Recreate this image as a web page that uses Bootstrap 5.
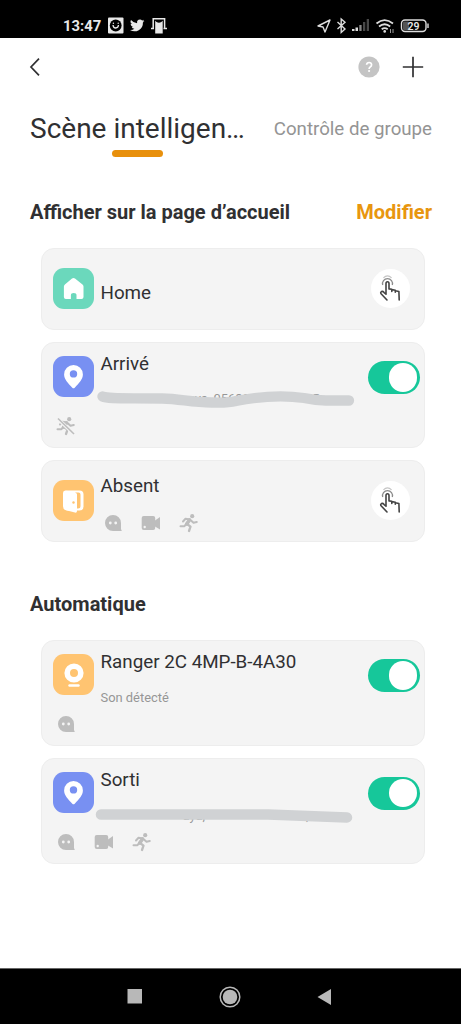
<!DOCTYPE html>
<html lang="fr">
<head>
<meta charset="utf-8">
<meta name="viewport" content="width=device-width, initial-scale=1">
<title>Scène intelligente</title>
<link href="https://cdn.jsdelivr.net/npm/bootstrap@5.3.0/dist/css/bootstrap.min.css" rel="stylesheet">
<style>
body{font-family:Roboto,"Liberation Sans",sans-serif;color:#303032;background:#fff;height:1024px;overflow:hidden}
svg{display:block;flex:none}
.statusbar{height:38px;background:#000;color:#e8e8e8;padding:0 31px 0 63px}
.clock{font-size:14.8px;line-height:26px;font-weight:700;width:45px;margin-top:13px}
.topbar{height:57px;padding:0 37px 0 28px}
.tabs{height:66px;padding:0 29px}
.tab-on{font-size:28px;line-height:36px;width:216px;margin-top:16px;padding-left:1px;white-space:nowrap}
.tab-on i{display:block;width:51px;height:6.5px;border-radius:4px;background:#e8900c;margin:3px auto 0}
.tab-off{font-size:18.7px;line-height:24px;color:#949494;margin-top:22px;white-space:nowrap}
.sect{font-size:20px;line-height:26px;font-weight:700;padding:0 29px 0 30px;white-space:nowrap}
.edit{color:#e8960f}
.scenes{padding:0 36px 0 41px;gap:12px}
.scene{background:#f4f4f4;border:1px solid #ededed;border-radius:13px;height:105.700px;padding:13px 4.5px 0 11px}
.scene.short{height:82px;padding-top:19px;padding-right:14.5px}
.tile{width:41px;height:41px;border-radius:11px}
.mint{background:#6bd8bc}.blue{background:#7890f2}.amber{background:#ffc471}
.info{margin-left:6.5px;white-space:nowrap}
.name{font-size:18.8px;line-height:24px}
.sub{font-size:12.9px;line-height:16px;color:#969696}
.glyphs{gap:16px;color:#bdbdbd}
.scene>.glyphs{margin:8px 0 0 2px}
.tap{width:39px;height:39px;background:#fff;margin-top:1px}
.toggle{width:52px;height:33px;border-radius:17px;background:#16c79a;padding:2px 2.5px;margin-top:5px}
.toggle b{width:28.5px;height:28.5px;background:#fff}
.brush{position:absolute;left:-7px;top:-5px}
.bottombar{height:56px;background:#000;border-top:1px solid #666}
</style>
</head>
<body class="d-flex flex-column">
<svg width="0" height="0" class="position-absolute">
 <symbol id="chat" viewBox="0 0 22 20"><path fill="currentColor" d="M11 2a8 7.900 0 0 1 8 7.900V16l.8 2H11a8 8 0 0 1 0-16Z"/><circle cx="8.300" cy="10" r="1.400" fill="#f4f4f4"/><circle cx="13.700" cy="10" r="1.400" fill="#f4f4f4"/></symbol>
 <symbol id="cam" viewBox="0 0 22 20"><rect x="1.700" y="3" width="13.500" height="14" rx="2" fill="currentColor"/><path fill="currentColor" d="M15 7.500 20 4v12.500l-5-3Z"/><circle cx="4.700" cy="14" r="1.200" fill="#f4f4f4"/></symbol>
 <symbol id="run" viewBox="0 0 22 20"><circle cx="14.200" cy="3.200" r="2.100" fill="currentColor"/><g fill="none" stroke="currentColor" stroke-linecap="round" stroke-linejoin="round"><path stroke-width="2" d="M5 8.500 7.500 5.800 12 6.500M13 7.500l2.500 2.300 3.300-.8M2.500 13.200h4l2-2.700"/><path stroke-width="3.600" d="m11.500 7-2.800 4"/><path stroke-width="2.300" d="m9 11 3.500 2.700-1.500 4.300"/></g></symbol>
 <symbol id="pin" viewBox="0 0 41 41"><path fill="#fff" fill-rule="evenodd" d="M20.500 9a9.400 9.400 0 0 1 9.400 9.400c0 4.800-4 8.700-8.200 13.300q-1.200 1-2.400 0c-4.200-4.600-8.200-8.500-8.200-13.300A9.400 9.400 0 0 1 20.500 9Zm0 5.200a3.700 3.700 0 1 0 0 7.400 3.700 3.700 0 0 0 0-7.400Z"/></symbol>
 <symbol id="hand" viewBox="0 0 39 39"><g fill="none" stroke="#444" stroke-width="1.600" stroke-linejoin="round" stroke-linecap="round"><path d="M16 31 10.300 25q-1.300-1.600.2-2.400 1.300-.6 2.600 1l1.900 1.600V14.600q0-1.800 1.500-1.800t1.500 1.800v5.300l2.800.4v2.200m0-1.900 3.500.6v2m0-1.500 3.600.8.300 8.500"/></g><path d="M11.700 16a5 5 0 1 1 9.600 0" fill="none" stroke="#8c8c8c" stroke-width="1.300"/><path d="M12.400 8.800q4.100-4 8.200 0" fill="none" stroke="#c4c4c4" stroke-width="1.100"/></symbol>
</svg>

<header class="statusbar d-flex align-items-start flex-shrink-0">
 <span class="clock">13:47</span>
 <svg width="60" height="18" viewBox="0 0 60 18" style="margin-top:17px"><rect width="15.500" height="16" y=".5" rx="1" fill="#e8e8e8"/><circle cx="7.700" cy="8.500" r="5.900" fill="#000"/><path d="M5 8q.2 3 2.700 3T10.500 8" fill="none" stroke="#e8e8e8" stroke-width="1.300"/><circle cx="5.400" cy="6.300" r=".7" fill="#e8e8e8"/><circle cx="10.200" cy="6.300" r=".7" fill="#e8e8e8"/>
 <path fill="#e8e8e8" transform="translate(22 1.200) scale(.6)" d="M24 4.560a10 10 0 0 1-2.830.780 4.940 4.940 0 0 0 2.160-2.720 9.900 9.900 0 0 1-3.120 1.190A4.920 4.920 0 0 0 11.800 8.300 14 14 0 0 1 1.670 3.150 4.930 4.930 0 0 0 3.200 9.720a4.900 4.900 0 0 1-2.230-.610 4.930 4.930 0 0 0 3.950 4.890 4.900 4.900 0 0 1-2.220.080 4.930 4.930 0 0 0 4.600 3.420A9.870 9.870 0 0 1 0 19.540 14 14 0 0 0 21.540 7.100 10 10 0 0 0 24 4.560Z"/>
 <path fill="none" stroke="#e8e8e8" stroke-width="1.500" d="M45.200 11.500V1.800h11.400v9.700M43 11.500h3m9.500 0h3.500"/><path fill="#e8e8e8" d="M47.200 3.800 48.500 5q2.500 1.500 4.800 0l1.400-1.200v12.700h-7.500Z"/></svg>
 <svg class="ms-auto" width="114" height="20" viewBox="316 15 114 20" style="margin-top:15px"><g fill="none" stroke="#ddd" stroke-width="1.400"><path stroke-linejoin="round" d="M318 26 330 20l-5 12-2-5Z"/><path d="m337.500 22 7.500 7-3.800 3.500V19L345 22.300l-7.500 6.700"/><path stroke-width="1.800" d="M376.500 23.500q8-6.800 16.500 0M379 26.500q5.700-4.600 11.200 0M381.700 29.300q3-2.300 6 0"/><rect x="401.500" y="20" width="24.500" height="11.500" rx="3.500"/><path d="M428 23.500v4.500"/></g><circle cx="384.700" cy="31.400" r="1.300" fill="#ddd"/><path stroke="#999" d="M390.500 29v4m2.500-4v4"/><rect x="403" y="21.500" width="6" height="8.500" rx="1" fill="#555"/><path fill="#ddd" d="M352 29h2.500v2H352Zm3.500-1.500h2.500V31h-2.500Z"/><path fill="#888" d="M359.300 25h2.300v6h-2.300Z"/><path fill="#484848" d="M363 22h2.300v9H363Zm3.700-3h2.300v12h-2.300Z"/><text x="413.600" y="29.700" text-anchor="middle" font-family="Roboto,sans-serif" font-size="10.500" font-weight="600" fill="#e8e8e8">29</text></svg>
</header>

<nav class="topbar d-flex align-items-center flex-shrink-0">
 <svg width="14" height="20" viewBox="0 0 14 20"><path d="M11 1.700 3 10l8 8.300" fill="none" stroke="#303032" stroke-width="1.700"/></svg>
 <svg class="ms-auto" width="22" height="22" viewBox="0 0 22 22"><circle cx="11" cy="11" r="10.600" fill="#c4c4c4"/><path d="M8.600 8.800q.2-2.300 2.500-2.300t2.500 2.300q0 1.400-1.400 2.200-1.100.7-1.100 2" fill="none" stroke="#fff" stroke-width="1.700"/><circle cx="11.100" cy="15" r="1.100" fill="#fff"/></svg>
 <svg style="margin-left:22px" width="22" height="22" viewBox="0 0 22 22"><path d="M.8 11h20.400M11 .8v20.400" stroke="#303032" stroke-width="1.700"/></svg>
</nav>

<div class="tabs d-flex justify-content-between flex-shrink-0">
 <div class="tab-on">Scène intelligen…<i></i></div>
 <div class="tab-off">Contrôle de groupe</div>
</div>

<div class="sect d-flex justify-content-between" style="margin-top:38px"><span>Afficher sur la page d’accueil</span><span class="edit">Modifier</span></div>

<section class="scenes d-flex flex-column" style="margin-top:23px">
 <article class="scene short d-flex flex-shrink-0">
  <div class="tile mint"><svg width="41" height="41"><path fill="#fff" d="M19 10.500q1.500-1.200 3 0l7.500 6q1 .8 1 2V29q0 2-2 2h-5v-4q0-2-2.800-2t-2.800 2v4h-5q-2 0-2-2V18.500q0-1.200 1-2Z"/></svg></div>
  <div class="info flex-grow-1"><div class="name" style="margin-top:13px">Home</div></div>
  <div class="tap rounded-circle"><svg width="39" height="39"><use href="#hand"/></svg></div>
 </article>
 <article class="scene flex-shrink-0">
  <div class="d-flex">
   <div class="tile blue"><svg width="41" height="41"><use href="#pin"/></svg></div>
   <div class="info flex-grow-1"><div class="name" style="margin-top:-4px">Arrivé</div>
    <div class="sub position-relative" style="margin-top:15px;padding-left:65px">D<span style="margin-left:14px">eva, 05680</span><span style="margin-left:63px">D</span><svg class="brush" width="270" height="24" viewBox="0 0 270 24"><path d="M8.500 10.500C14 13 30 12 68 12.500c20 .5 28 4 50 4 14 .5 18 0 24-1.500 26-5 50-5.500 68-3 12 2.500 16 2.500 22 2.500h23" fill="none" stroke="#d0d2d4" stroke-width="10.300" stroke-linecap="round"/></svg></div></div>
   <div class="toggle d-flex justify-content-end"><b class="rounded-circle"></b></div>
  </div>
  <div class="glyphs d-flex" style="margin-top:9px"><svg width="22" height="20"><use href="#run"/><path d="m2.500 2.500 17 16" stroke="#f4f4f4" stroke-width="3.500"/><path d="m3 2.500 16 15.500" stroke="#bdbdbd" stroke-width="1.600"/></svg></div>
 </article>
 <article class="scene short d-flex flex-shrink-0">
  <div class="tile amber"><svg width="41" height="41"><rect x="11" y="10.500" width="19.500" height="20" rx="4" fill="#fff"/><path d="M22 12.500h3.500q2 0 2 2V26q0 2.500-2.500 2.500h-1V15q0-1.500-2-2.500Z" fill="#ffc471"/><path d="M10 13q0-3 3-2.500l9 2q2 .5 2 3V31q0 2-2 1.600l-9-2.400q-3-.8-3-4Z" fill="#fff"/><circle cx="20.500" cy="22.500" r="1.200" fill="#ffc471"/></svg></div>
  <div class="info flex-grow-1"><div class="name" style="margin-top:-6px">Absent</div>
   <div class="glyphs d-flex" style="margin:15px 0 0 1px"><svg width="22" height="20"><use href="#chat"/></svg><svg width="22" height="20"><use href="#cam"/></svg><svg width="22" height="20"><use href="#run"/></svg></div></div>
  <div class="tap rounded-circle"><svg width="39" height="39"><use href="#hand"/></svg></div>
 </article>
</section>

<div class="sect" style="margin-top:49.500px">Automatique</div>

<section class="scenes d-flex flex-column" style="margin-top:23px">
 <article class="scene flex-shrink-0">
  <div class="d-flex">
   <div class="tile amber"><svg width="41" height="41"><circle cx="21" cy="19" r="6.800" fill="none" stroke="#fff" stroke-width="5.600"/><path d="M16.500 31.500h9" stroke="#fff" stroke-width="2.400" stroke-linecap="round"/></svg></div>
   <div class="info flex-grow-1"><div class="name" style="margin-top:-4px">Ranger 2C 4MP-B-4A30</div><div class="sub" style="margin-top:16px">Son détecté</div></div>
   <div class="toggle d-flex justify-content-end"><b class="rounded-circle"></b></div>
  </div>
  <div class="glyphs d-flex"><svg width="22" height="20"><use href="#chat"/></svg></div>
 </article>
 <article class="scene flex-shrink-0">
  <div class="d-flex">
   <div class="tile blue"><svg width="41" height="41"><use href="#pin"/></svg></div>
   <div class="info flex-grow-1"><div class="name" style="margin-top:-4px">Sorti</div>
    <div class="sub position-relative" style="margin-top:16px"><span style="margin-left:82px">aya,</span><span style="margin-left:101px">,</span><svg class="brush" width="270" height="24" viewBox="0 0 270 24"><path d="M7 11.500H174l79 3" fill="none" stroke="#d0d2d4" stroke-width="10.500" stroke-linecap="round" stroke-linejoin="round"/></svg></div></div>
   <div class="toggle d-flex justify-content-end"><b class="rounded-circle"></b></div>
  </div>
  <div class="glyphs d-flex"><svg width="22" height="20"><use href="#chat"/></svg><svg width="22" height="20"><use href="#cam"/></svg><svg width="22" height="20"><use href="#run"/></svg></div>
 </article>
</section>

<footer class="bottombar d-flex align-items-center mt-auto flex-shrink-0">
 <svg style="margin-left:127px" width="15" height="15"><rect x=".5" width="14.500" height="14.500" fill="#b8b8b8"/></svg>
 <svg style="margin-left:77px" width="22" height="22"><circle cx="11" cy="11" r="9.800" fill="none" stroke="#b8b8b8" stroke-width="1.500"/><circle cx="11" cy="11" r="7.300" fill="#b8b8b8"/></svg>
 <svg style="margin-left:76px" width="15" height="16"><path d="M.5 8 14 0v16Z" fill="#b8b8b8"/></svg>
</footer>
<script src="https://cdn.jsdelivr.net/npm/bootstrap@5.3.0/dist/js/bootstrap.bundle.min.js"></script>
</body>
</html>
